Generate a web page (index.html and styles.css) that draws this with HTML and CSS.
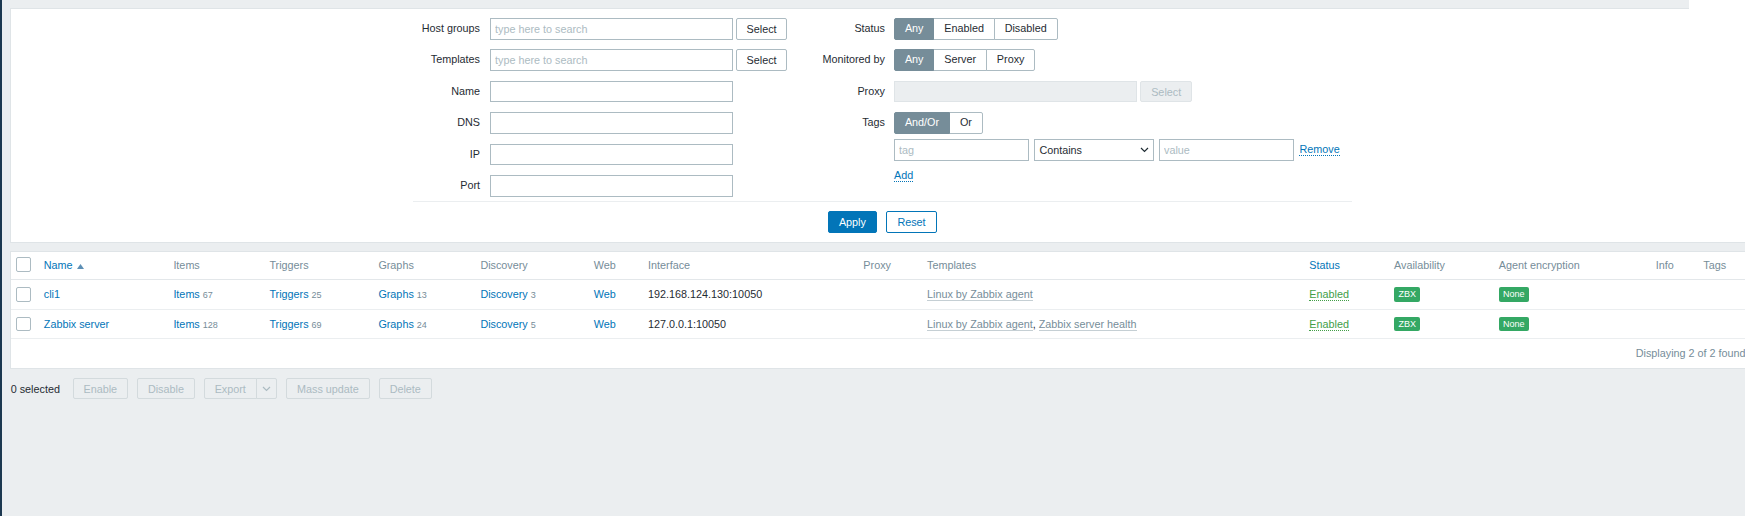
FILE: index.html
```html
<!DOCTYPE html>
<html lang="en">
<head>
<meta charset="utf-8">
<title>Hosts</title>
<link rel="stylesheet" href="styles.css">
</head>
<body>
<div class="page">
  <div class="filter">
    <div class="filter-top"><div class="tab-strip"></div></div>
    <div class="filter-body">
      <div class="filter-form">
        <div class="fcol fcol-left">
          <label class="flabel">Host groups</label>
          <div class="fctrl"><input class="inp w-ms" placeholder="type here to search"><button class="btn-alt">Select</button></div>
          <label class="flabel">Templates</label>
          <div class="fctrl"><input class="inp w-ms" placeholder="type here to search"><button class="btn-alt">Select</button></div>
          <label class="flabel">Name</label>
          <div class="fctrl"><input class="inp w-ms"></div>
          <label class="flabel">DNS</label>
          <div class="fctrl"><input class="inp w-ms"></div>
          <label class="flabel">IP</label>
          <div class="fctrl"><input class="inp w-ms"></div>
          <label class="flabel">Port</label>
          <div class="fctrl"><input class="inp w-ms"></div>
        </div>
        <div class="fcol fcol-right">
          <label class="flabel">Status</label>
          <div class="fctrl">
            <div class="seg"><span class="on">Any</span><span>Enabled</span><span>Disabled</span></div>
          </div>
          <label class="flabel">Monitored by</label>
          <div class="fctrl">
            <div class="seg"><span class="on">Any</span><span>Server</span><span>Proxy</span></div>
          </div>
          <label class="flabel">Proxy</label>
          <div class="fctrl"><input class="inp w-ms inp-dis" disabled><button class="btn-alt btn-alt-dis">Select</button></div>
          <label class="flabel flabel-top">Tags</label>
          <div class="fctrl tags-block">
            <div class="seg"><span class="on">And/Or</span><span>Or</span></div>
            <div class="tag-row">
              <input class="inp w-tag" placeholder="tag">
              <div class="sel">
                <span>Contains</span>
                <svg width="9" height="6" viewBox="0 0 9 6"><polyline points="1,1 4.5,4.5 8,1" fill="none" stroke="#1f2c33" stroke-width="1.2"/></svg>
              </div>
              <input class="inp w-tag" placeholder="value">
              <a class="link-dot">Remove</a>
            </div>
            <a class="link-dot add-link">Add</a>
          </div>
        </div>
      </div>
      <div class="filter-buttons">
        <button class="btn-primary">Apply</button>
        <button class="btn-outline">Reset</button>
      </div>
    </div>
  </div>

  <div class="list">
    <table class="hosts">
      <colgroup>
        <col class="w-cb"><col class="w-name"><col class="w-items"><col class="w-trig"><col class="w-graph">
        <col class="w-disc"><col class="w-web"><col class="w-iface"><col class="w-proxy"><col class="w-tpl">
        <col class="w-status"><col class="w-avail"><col class="w-enc"><col class="w-info"><col class="w-tags">
      </colgroup>
      <thead>
        <tr>
          <th><span class="cb"></span></th>
          <th><a class="link">Name</a><svg class="sort" width="7" height="5" viewBox="0 0 7 5"><polygon points="0,5 3.5,0 7,5" fill="#5d8fb5"/></svg></th>
          <th>Items</th>
          <th>Triggers</th>
          <th>Graphs</th>
          <th>Discovery</th>
          <th>Web</th>
          <th>Interface</th>
          <th>Proxy</th>
          <th>Templates</th>
          <th><a class="link">Status</a></th>
          <th>Availability</th>
          <th>Agent encryption</th>
          <th>Info</th>
          <th>Tags</th>
        </tr>
      </thead>
      <tbody>
        <tr>
          <td><span class="cb"></span></td>
          <td><a class="link">cli1</a></td>
          <td><a class="link">Items</a> <span class="cnt">67</span></td>
          <td><a class="link">Triggers</a> <span class="cnt">25</span></td>
          <td><a class="link">Graphs</a> <span class="cnt">13</span></td>
          <td><a class="link">Discovery</a> <span class="cnt">3</span></td>
          <td><a class="link">Web</a></td>
          <td>192.168.124.130:10050</td>
          <td></td>
          <td><a class="tpl">Linux by Zabbix agent</a></td>
          <td><a class="enabled">Enabled</a></td>
          <td><span class="badge">ZBX</span></td>
          <td><span class="badge">None</span></td>
          <td></td>
          <td></td>
        </tr>
        <tr>
          <td><span class="cb"></span></td>
          <td><a class="link">Zabbix server</a></td>
          <td><a class="link">Items</a> <span class="cnt">128</span></td>
          <td><a class="link">Triggers</a> <span class="cnt">69</span></td>
          <td><a class="link">Graphs</a> <span class="cnt">24</span></td>
          <td><a class="link">Discovery</a> <span class="cnt">5</span></td>
          <td><a class="link">Web</a></td>
          <td>127.0.0.1:10050</td>
          <td></td>
          <td><a class="tpl">Linux by Zabbix agent</a>, <a class="tpl">Zabbix server health</a></td>
          <td><a class="enabled">Enabled</a></td>
          <td><span class="badge">ZBX</span></td>
          <td><span class="badge">None</span></td>
          <td></td>
          <td></td>
        </tr>
      </tbody>
    </table>
    <div class="paging">Displaying 2 of 2 found</div>
  </div>

  <div class="actions">
    <span class="sel-count">0 selected</span>
    <button class="btn-dis">Enable</button>
    <button class="btn-dis">Disable</button>
    <div class="split">
      <button class="btn-dis split-main">Export</button>
      <button class="btn-dis split-arrow"><svg width="9" height="6" viewBox="0 0 9 6"><polyline points="1,1 4.5,4.5 8,1" fill="none" stroke="#acbbc2" stroke-width="1.2"/></svg></button>
    </div>
    <button class="btn-dis">Mass update</button>
    <button class="btn-dis">Delete</button>
  </div>
</div>
</body>
</html>
```

FILE: styles.css
```css
html {
  background: #ebeef0;
}
body {
  margin: 0;
  min-height: 516px;
  background: #ebeef0;
  border-left: 2px solid #1c3850;
  overflow: hidden;
  font-family: "Liberation Sans", Arial, sans-serif;
  font-size: 10.8px;
  color: #1f2c33;
}
button, input {
  font-family: "Liberation Sans", Arial, sans-serif;
  font-size: 10.8px;
}
.page {
  width: 1745px;
  margin-left: 8px;
}

/* Filter */
.filter-top {
  height: 9px;
  background: #fff;
  display: flex;
}
.tab-strip {
  width: 1679px;
  height: 8px;
  background: #ebeef0;
  border-bottom: 1px solid #dfe4e7;
}
.filter-body {
  background: #fff;
  border: 1px solid #dfe4e7;
  border-top: 0;
  padding: 9px 0 9.4px;
}
.filter-form {
  width: 939px;
  margin: 0 auto;
  display: flex;
  padding-bottom: 4.4px;
  border-bottom: 1px solid #ebeef0;
}
.fcol {
  display: grid;
  row-gap: 9.8px;
  align-items: center;
  align-content: start;
}
.fcol-left {
  width: 409.6px;
  grid-template-columns: 67px 1fr;
  column-gap: 10px;
}
.fcol-right {
  flex: 1;
  grid-template-columns: 62.4px 1fr;
  column-gap: 9px;
}
.flabel {
  text-align: right;
  line-height: 21.6px;
  white-space: nowrap;
}
.flabel-top {
  align-self: start;
}
.fctrl {
  display: flex;
  align-items: center;
}
.inp {
  box-sizing: border-box;
  height: 21.6px;
  border: 1px solid #acbbc2;
  border-radius: 0;
  padding: 0 4px;
  margin: 0;
  background: #fff;
  color: #1f2c33;
  outline: none;
}
.inp::placeholder {
  color: #acbbc2;
}
.w-ms { width: 243px; }
.w-tag { width: 135px; }
.inp-dis {
  background: #ebeef0;
  border-color: #dfe4e7;
}
.btn-alt {
  box-sizing: border-box;
  height: 21.6px;
  margin: 0 0 0 2.7px;
  padding: 0 9.9px;
  border: 1px solid #acbbc2;
  border-radius: 2px;
  background: #fff;
  color: #1f2c33;
}
.btn-alt-dis {
  margin-left: 3.3px;
  background: #ebeef0;
  border-color: #dfe4e7;
  color: #acbbc2;
}
.seg {
  display: inline-flex;
}
.seg span {
  box-sizing: border-box;
  height: 21.6px;
  line-height: 19.6px;
  padding: 0 9.9px;
  border: 1px solid #acbbc2;
  margin-left: -1px;
  background: #fff;
  color: #1f2c33;
}
.seg span:first-child {
  margin-left: 0;
  border-radius: 2px 0 0 2px;
}
.seg span:last-child {
  border-radius: 0 2px 2px 0;
}
.seg span.on {
  background: #768d99;
  border-color: #768d99;
  color: #fff;
  position: relative;
}
.tags-block {
  flex-direction: column;
  align-items: flex-start;
}
.tag-row {
  display: flex;
  align-items: center;
  gap: 5.4px;
  margin-top: 5.4px;
}
.sel {
  box-sizing: border-box;
  width: 119.3px;
  height: 21.6px;
  border: 1px solid #acbbc2;
  padding: 0 4px 0 4px;
  display: flex;
  align-items: center;
  justify-content: space-between;
  background: #fff;
}
.link-dot {
  color: #0275b8;
  border-bottom: 1px dotted #0275b8;
  line-height: 12px;
  cursor: pointer;
}
.add-link {
  margin-top: 8px;
}
.filter-buttons {
  display: flex;
  justify-content: center;
  gap: 9px;
  padding-top: 9px;
}
.btn-primary, .btn-outline {
  box-sizing: border-box;
  height: 21.6px;
  padding: 0 10px;
  border: 1px solid #0275b8;
  border-radius: 2px;
  margin: 0;
}
.btn-primary {
  background: #0275b8;
  color: #fff;
}
.btn-outline {
  background: #fff;
  color: #0275b8;
  padding: 0 10.5px;
}

/* List */
.list {
  margin-top: 8px;
  background: #fff;
  border: 1px solid #dfe4e7;
}
.hosts {
  width: 1743px;
  table-layout: fixed;
  border-collapse: collapse;
}
.w-cb { width: 27.4px; }
.w-name { width: 129.6px; }
.w-items { width: 96px; }
.w-trig { width: 109px; }
.w-graph { width: 102px; }
.w-disc { width: 113.4px; }
.w-web { width: 54.3px; }
.w-iface { width: 215.3px; }
.w-proxy { width: 63.7px; }
.w-tpl { width: 382.3px; }
.w-status { width: 84.7px; }
.w-avail { width: 104.7px; }
.w-enc { width: 157px; }
.w-info { width: 47.6px; }
.w-tags { width: 56.1px; }
.hosts th, .hosts td {
  padding: 0 5.4px;
  text-align: left;
  white-space: nowrap;
  overflow: hidden;
  vertical-align: middle;
}
.hosts th {
  height: 25.3px;
  padding-bottom: 2px;
  font-weight: normal;
  color: #768d99;
  border-bottom: 1px solid #e3e7ea;
}
.hosts td {
  height: 28.4px;
  border-bottom: 1px solid #ebeef0;
}
.cb {
  display: block;
  box-sizing: border-box;
  width: 14.4px;
  height: 14.4px;
  border: 1px solid #acbbc2;
  border-radius: 2px;
  background: #fff;
}
.link {
  color: #0275b8;
  text-decoration: none;
  cursor: pointer;
}
.sort {
  margin-left: 4px;
  vertical-align: 0px;
}
.cnt {
  font-size: 9px;
  color: #768d99;
}
.tpl {
  color: #768d99;
  border-bottom: 1px solid #c5cfd4;
  cursor: pointer;
}
.enabled {
  color: #429e47;
  border-bottom: 1px dotted #429e47;
  cursor: pointer;
}
.badge {
  display: inline-block;
  padding: 0 4.4px;
  height: 14.6px;
  line-height: 14.6px;
  font-size: 9px;
  color: #fff;
  background: #34a864;
  border-radius: 2px;
  vertical-align: middle;
}
.paging {
  height: 29px;
  line-height: 29px;
  text-align: right;
  padding-right: 8.4px;
  color: #768d99;
  white-space: nowrap;
}

/* Actions */
.actions {
  display: flex;
  align-items: center;
  gap: 9.4px;
  margin-top: 9.3px;
  padding-left: 0.7px;
}
.sel-count {
  margin-right: 3.5px;
  color: #1f2c33;
}
.btn-dis {
  box-sizing: border-box;
  height: 20.7px;
  padding: 0 9.7px;
  margin: 0;
  border: 1px solid #d3dadd;
  border-radius: 2px;
  background: #ebeef0;
  color: #acbbc2;
}
.split {
  display: flex;
}
.split-main {
  border-radius: 2px 0 0 2px;
}
.split-arrow {
  width: 21.4px;
  padding: 0;
  margin-left: -1px;
  border-radius: 0 2px 2px 0;
  display: flex;
  align-items: center;
  justify-content: center;
}
```
